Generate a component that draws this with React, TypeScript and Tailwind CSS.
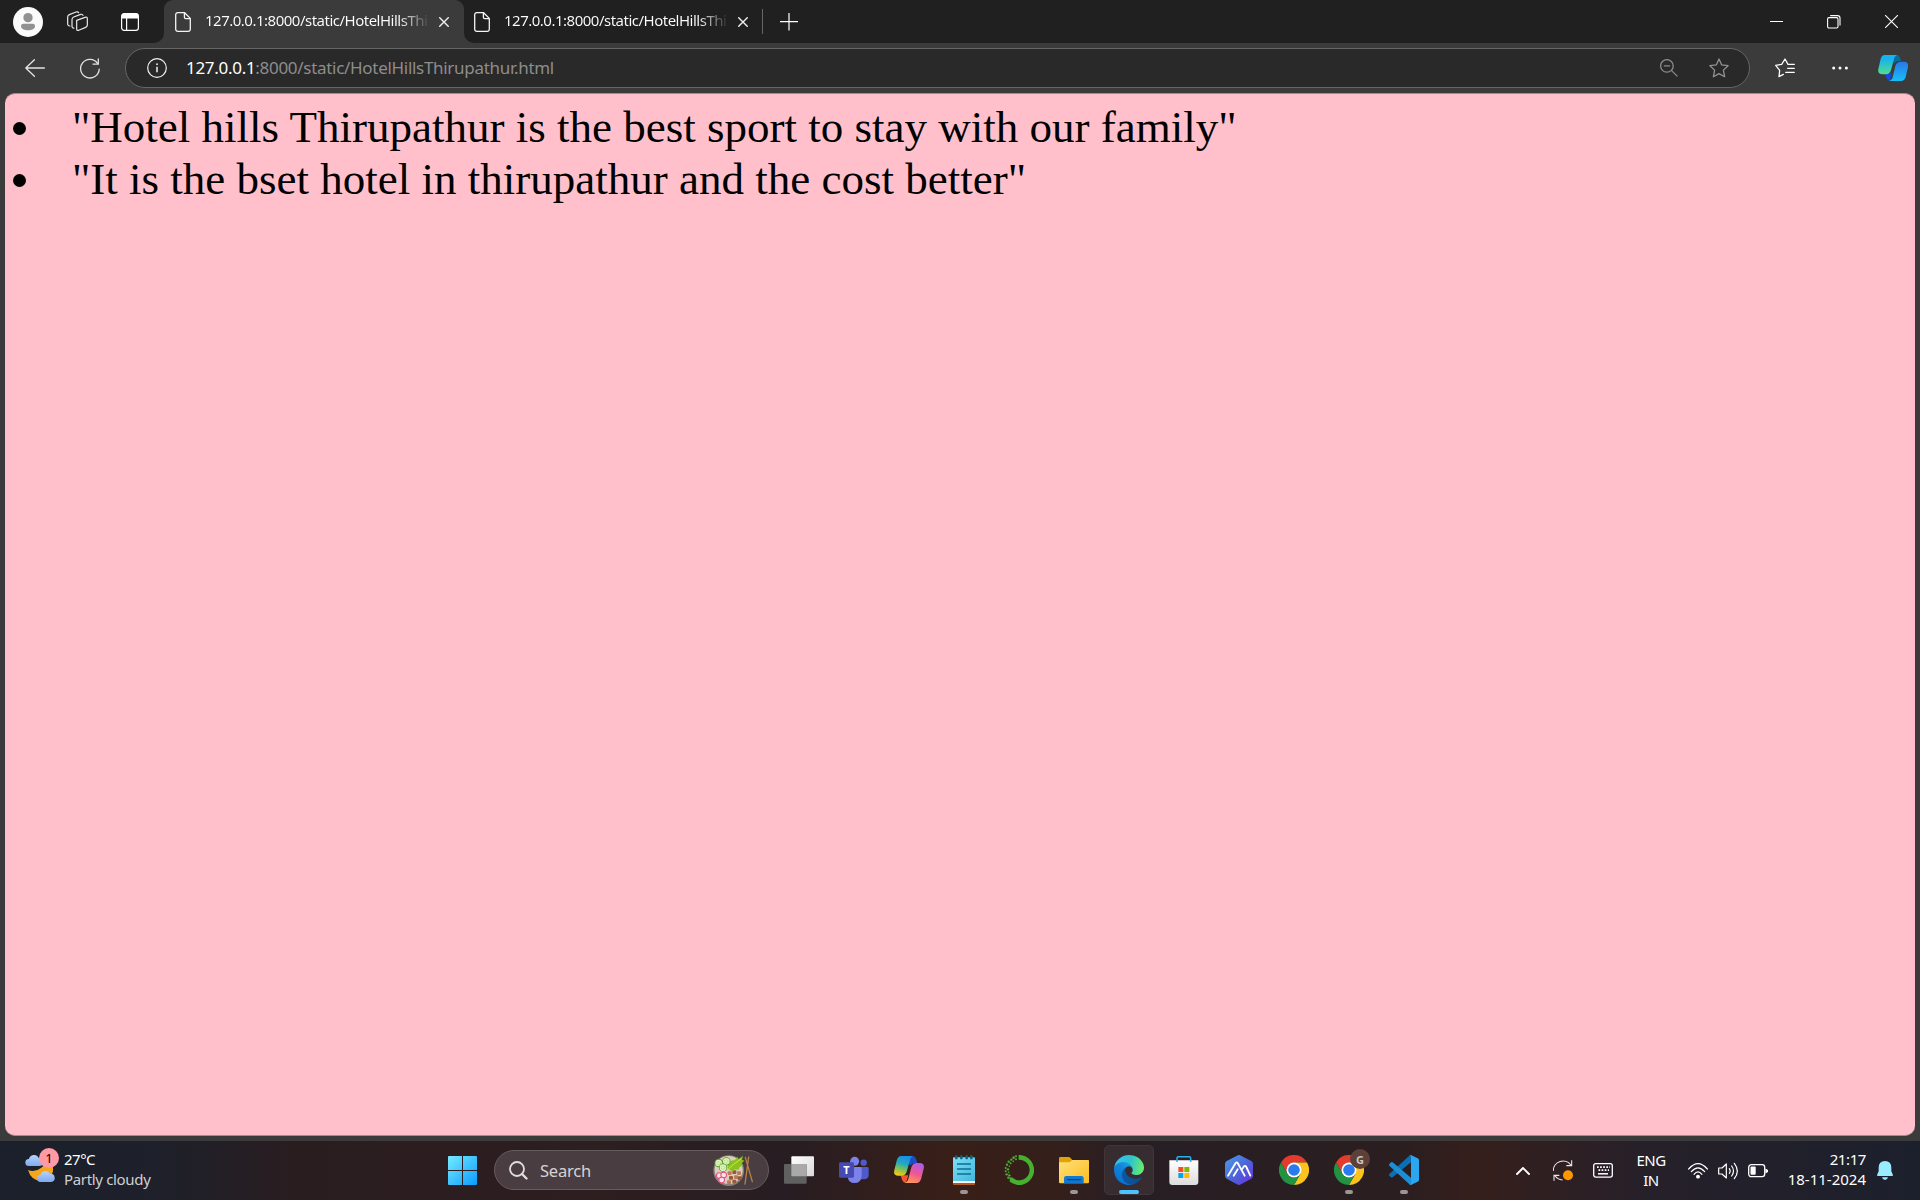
import React from "react";

const UI = "font-['Noto_Sans','Open_Sans',sans-serif]";

function FileIcon() {
  return (
    <svg className="h-5 w-4 shrink-0" viewBox="0 0 16 20" fill="none" stroke="#f5f5f5" strokeWidth="1.3">
      <path d="M2.8.7H9.6L15.3 6.4V17.2a2.1 2.1 0 0 1-2.1 2.1H2.8A2.1 2.1 0 0 1 .7 17.2V2.8A2.1 2.1 0 0 1 2.8.7Z" />
      <path d="M9.4.9V5.2a1.4 1.4 0 0 0 1.4 1.4h4.3" />
    </svg>
  );
}

function Tab({ active }: { active?: boolean }) {
  return (
    <div
      className={
        active
          ? "relative flex h-[43px] w-[300px] items-center rounded-t-[9px] bg-[#3b3b3b] pl-[11px]"
          : "relative flex h-[43px] w-[298px] items-center pl-[10px]"
      }
    >
      {active && (
        <>
          <svg className="absolute -left-2.5 bottom-0 h-2.5 w-2.5" viewBox="0 0 10 10">
            <path d="M10 0V10H0A10 10 0 0 0 10 0Z" fill="#3b3b3b" />
          </svg>
          <svg className="absolute -right-2.5 bottom-0 h-2.5 w-2.5" viewBox="0 0 10 10">
            <path d="M0 0V10H10A10 10 0 0 1 0 0Z" fill="#3b3b3b" />
          </svg>
        </>
      )}
      <FileIcon />
      <div className="mb-[3px] ml-[14px] w-[223px] whitespace-nowrap bg-gradient-to-r from-white from-[87%] to-transparent to-[101%] bg-clip-text text-[15px] leading-[20px] tracking-[-0.5px] text-transparent">
        127.0.0.1:8000/static/HotelHillsThi
      </div>
      <svg className="ml-[11px] h-2.5 w-2.5 shrink-0" viewBox="0 0 10 10" stroke="#f0f0f0" strokeWidth="1.4">
        <path d="M.3 .3 9.7 9.7M9.7 .3 .3 9.7" />
      </svg>
    </div>
  );
}

function TabStrip() {
  return (
    <div className="flex h-[43px] items-center bg-[#202020]">
      <svg className="ml-[13px] h-[30px] w-[30px]" viewBox="0 0 90 90">
        <circle cx="45" cy="45" r="45" fill="#fbfbfb" />
        <circle cx="45" cy="32" r="14" fill="#919191" />
        <path d="M31 50H59a7 7 0 0 1 7 7C66 66 56 70 45 70S24 66 24 57a7 7 0 0 1 7-7Z" fill="#919191" />
      </svg>
      <svg className="ml-6 h-[21px] w-[21px]" viewBox="0 0 63 63" fill="none" stroke="#e8e8e8" strokeWidth="3.6" strokeLinejoin="round" strokeLinecap="round">
        <path d="M29 28 54 19Q61 17 61 23V42Q61 47 56 49L37 57Q29 61 29 54Z" />
        <path d="M21 51Q15 52 15 45V26Q15 20 20 18L41 10Q47 9 48 13" />
        <path d="M9 45Q2 45 2 38V18Q2 13 7 11L27 3Q33 1 35 5" />
      </svg>
      <svg className="ml-[33px] h-[18px] w-[18px]" viewBox="0 0 18 18">
        <rect x=".6" y=".6" width="16.8" height="16.8" rx="2.6" fill="none" stroke="#fff" strokeWidth="1.2" />
        <path d="M.6 5.4V3A2.4 2.4 0 0 1 3 .6H15A2.4 2.4 0 0 1 17.4 3V5.4Z" fill="#fff" />
        <path d="M5.6 5V17.4" stroke="#fff" strokeWidth="1.2" />
      </svg>
      <div className="ml-[25px] flex">
        <Tab active />
        <Tab />
      </div>
      <div className="h-[25px] w-px bg-[#666]" />
      <svg className="ml-[17px] h-[18px] w-[18px]" viewBox="0 0 18 18" stroke="#fff" strokeWidth="1.2">
        <path d="M9 0V17.5M0 8.6H18" />
      </svg>
      <div className="ml-auto flex items-center pr-[22px]">
        <div className="h-px w-[13px] bg-white" />
        <svg className="ml-11 h-[14px] w-[14px]" viewBox="0 0 14 14" fill="none" stroke="#fff" strokeWidth="1.1">
          <rect x=".6" y="2.6" width="10.4" height="10.4" rx="1.4" />
          <path d="M3.2.6H10.6A2.4 2.4 0 0 1 13 3V10.6" />
        </svg>
        <svg className="ml-11 h-[13px] w-[13px]" viewBox="0 0 13 13" stroke="#fff" strokeWidth="1.1">
          <path d="M0 0 13 13M13 0 0 13" />
        </svg>
      </div>
    </div>
  );
}

function Toolbar() {
  return (
    <div className="flex h-[50px] items-center bg-[#3b3b3b]">
      <svg className="ml-[25px] h-[18px] w-5" viewBox="0 0 20 18" fill="none" stroke="#e4e4e4" strokeWidth="1.3" strokeLinecap="round" strokeLinejoin="round">
        <path d="M19.4 9H.8M9.4.7.8 9 9.4 17.3" />
      </svg>
      <svg className="ml-[35px] h-[21px] w-5" viewBox="0 0 20 21" fill="none" stroke="#e4e4e4" strokeWidth="1.3" strokeLinecap="round">
        <path d="M19.2 11.2A9.3 9.3 0 1 1 17.6 5.4" />
        <path d="M18.3.9V6.1H13" />
      </svg>
      <div className="ml-[25px] flex h-10 w-[1625px] items-center rounded-full border border-[#666] bg-[#292929] pl-[21px] pr-[20px]">
        <svg className="h-5 w-5" viewBox="0 0 20 20" fill="none" stroke="#f2f2f2" strokeWidth="1.2">
          <circle cx="10" cy="10" r="9.3" />
          <path d="M10 8.8V14.2" strokeWidth="1.5" />
          <circle cx="10" cy="6.2" r=".9" fill="#f2f2f2" stroke="none" />
        </svg>
        <div className="ml-[19px] whitespace-nowrap text-[17px] leading-6 tracking-[-0.3px] text-[#8d8d8d]">
          <span className="text-white">127.0.0.1</span>:8000/static/HotelHillsThirupathur.html
        </div>
        <svg className="ml-auto h-[18px] w-[18px]" viewBox="0 0 18 18" fill="none" stroke="#8b8b8b" strokeWidth="1.3">
          <circle cx="6.9" cy="6.9" r="6.3" />
          <path d="M3.8 6.9H10M11.4 11.4 17.4 17.4" />
        </svg>
        <svg className="ml-[31px] h-5 w-5" viewBox="0 0 20 20" fill="none" stroke="#929292" strokeWidth="1.3" strokeLinejoin="round">
          <path d="M10 1 12.7 6.9 19.1 7.7 14.4 12.1 15.6 18.7 10 15.6 4.4 18.7 5.6 12.1 .9 7.7 7.3 6.9Z" />
        </svg>
      </div>
      <svg className="ml-[25px] h-5 w-5" viewBox="0 0 60 60" fill="none" stroke="#fff" strokeWidth="3.8" strokeLinejoin="round" strokeLinecap="round">
        <path d="M25 49 12 56 14 37 2 22 20 19 30 3 39 19H58M38 31H58M32 43H58" />
      </svg>
      <svg className="ml-[37px] h-1 w-4" viewBox="0 0 16 4" fill="#fff">
        <circle cx="1.7" cy="2" r="1.5" />
        <circle cx="8" cy="2" r="1.5" />
        <circle cx="14.4" cy="2" r="1.5" />
      </svg>
      <svg className="ml-[30px] h-[30px] w-[30px]" viewBox="0 0 90 90">
        <defs>
          <linearGradient id="ca" x1="0" y1="0" x2="0" y2="1"><stop offset=".2" stopColor="#16b3ee" /><stop offset="1" stopColor="#52dd8d" /></linearGradient>
          <linearGradient id="cb" x1="0" y1="0" x2="0" y2="1"><stop offset="0" stopColor="#2878e8" /><stop offset="1" stopColor="#19bdf5" /></linearGradient>
        </defs>
        <path d="M47 6H59Q64 7 66 15L69 24Q53 22 49 31L42 20Z" fill="#076d9c" />
        <path d="M21 61H42L36 84Q27 82 24 73Z" fill="#1647e0" />
        <path d="M20 6H59Q51 7 48 18L39 51Q35 64 24 64H14Q-2 64 1 48L8 18Q11 6 20 6Z" fill="url(#ca)" />
        <path d="M69 26H77Q93 26 90 42L83 72Q79 84 69 84H32Q41 83 44 73L52 39Q56 26 69 26Z" fill="url(#cb)" />
      </svg>
    </div>
  );
}

function BrowserPage() {
  return (
    <div className="h-[1048px] bg-[#3b3b3b] px-[5px]">
      <main className="h-[1043px] rounded-[10px] border-y border-y-[#a58b90] bg-[#ffc0cb] pt-[7px] font-['Liberation_Serif',serif] text-[45px] leading-[52px] text-black">
        <ul>
          {[
            '"Hotel hills Thirupathur is the best sport to stay with our family"',
            '"It is the bset hotel in thirupathur and the cost better"',
          ].map((t) => (
            <li key={t} className="flex h-[52px] items-center whitespace-nowrap">
              <span className="ml-2 mt-[3px] h-[13px] w-[13px] rounded-full bg-black" />
              <span className="ml-[46px]">{t}</span>
            </li>
          ))}
        </ul>
      </main>
    </div>
  );
}

function TaskView() {
  return (
    <svg viewBox="0 0 90 90">
      <defs><linearGradient id="tv" x1="0" y1="0" x2="1" y2="1"><stop stopColor="#fff" /><stop offset="1" stopColor="#d8d8d8" /></linearGradient></defs>
      <rect x="22" y="4" width="68" height="60" rx="3" fill="url(#tv)" />
      <rect x="0" y="27" width="68" height="59" rx="3" fill="#606060" />
      <path d="M22 27H65a3 3 0 0 1 3 3V64H25a3 3 0 0 1-3-3Z" fill="#a9a9a9" />
    </svg>
  );
}

function Teams() {
  return (
    <svg viewBox="0 0 90 90">
      <circle cx="74" cy="23" r="9.5" fill="#5059c9" />
      <path d="M58 36H85Q89 36 89 40V61Q88 73 75 73H58Z" fill="#5059c9" />
      <circle cx="47" cy="19" r="13.5" fill="#7b83eb" />
      <path d="M26 36H64Q68 36 68 40V62Q67 84 46 84 29 84 26 66Z" fill="#7b83eb" />
      <rect x="0" y="22" width="45" height="46" rx="4" fill="#454bb0" />
      <text x="22.5" y="57" textAnchor="middle" fontSize="33" fontWeight="700" fill="#fff" fontFamily="Noto Sans, sans-serif">T</text>
    </svg>
  );
}

function Copilot() {
  return (
    <svg viewBox="0 0 90 90">
      <defs>
        <linearGradient id="pa" x1=".6" y1="0" x2=".3" y2="1"><stop stopColor="#168ee8" /><stop offset=".4" stopColor="#22a9c0" /><stop offset=".72" stopColor="#8dc34a" /><stop offset="1" stopColor="#f9c913" /></linearGradient>
        <linearGradient id="pb" x1=".7" y1="0" x2=".3" y2="1"><stop stopColor="#ae5ce8" /><stop offset=".5" stopColor="#ef5694" /><stop offset="1" stopColor="#ff9a56" /></linearGradient>
      </defs>
      <path d="M45 3H57Q64 4 67 14L70 25Q54 23 50 32L40 20Z" fill="#1c4ec9" />
      <path d="M20 61H43L36 84Q27 83 24 74Z" fill="#f5562f" />
      <path d="M21 3H58Q51 4 48 15L38 50Q34 62 23 62H13Q-3 62 1 46L8 17Q12 3 21 3Z" fill="url(#pa)" />
      <path d="M69 24H77Q93 24 89 41L82 70Q78 84 68 84H31Q40 83 43 72L52 37Q56 24 69 24Z" fill="url(#pb)" />
    </svg>
  );
}

function Notepad() {
  return (
    <svg viewBox="0 0 90 90">
      <defs><linearGradient id="np" x1="0" y1="0" x2="1" y2="1"><stop stopColor="#7fe0f4" /><stop offset="1" stopColor="#42b6dc" /></linearGradient></defs>
      <rect x="12" y="78" width="66" height="12" rx="3" fill="#b3591f" />
      <rect x="12" y="74" width="66" height="10" fill="#f4f4f4" />
      <path d="M12 10Q12 7 15 7H75Q78 7 78 10V78H12Z" fill="url(#np)" />
      {[22, 37, 53, 67].map((x) => <rect key={x} x={x - 3.5} y="0" width="7" height="13" rx="3.5" fill="#09647f" />)}
      <path d="M24 27H66M24 42H66M24 57H66" stroke="#0d6f92" strokeWidth="5" />
    </svg>
  );
}

const ringDots = [
  [36, 4, 3], [29, 8, 4], [36, 13, 3], [22, 14, 3.500], [28, 19, 2.500], [14, 20, 3.500], [20, 25, 3], [9, 29, 3.500], [16, 34, 2.500],
  [5, 39, 3], [12, 43, 3.500], [5, 49, 3], [14, 52, 2.500], [8, 58, 3.500], [16, 61, 3.500], [13, 68, 3.500], [20, 71, 4],
];

function Anaconda() {
  return (
    <svg viewBox="0 0 90 90" fill="#46b12f">
      <path d="M44 0A45 45 0 1 1 16 79L24 67A31 31 0 1 0 44 14Z" />
      {ringDots.map(([x, y, r]) => <circle key={`${x}-${y}`} cx={x} cy={y} r={r} />)}
    </svg>
  );
}

function Explorer() {
  return (
    <svg viewBox="0 0 90 90">
      <defs><linearGradient id="fo" x1="0" y1="0" x2="1" y2="1"><stop stopColor="#ffe07a" /><stop offset="1" stopColor="#fdbc20" /></linearGradient></defs>
      <path d="M0 10Q0 6 4 6H29Q32 6 34 8L40 15H86Q90 15 90 19V60H0Z" fill="#e2a30a" />
      <path d="M0 22H29Q33 22 36 19L39 15H86Q90 15 90 19V81Q90 85 86 85H4Q0 85 0 81Z" fill="url(#fo)" />
      <path d="M15 85V70Q15 63 22 63H67Q74 63 74 70V85Z" fill="#1078d0" />
      <path d="M26 74H64" stroke="#0a3f7c" strokeWidth="3.5" strokeLinecap="round" />
    </svg>
  );
}

function Edge() {
  return (
    <svg viewBox="0 0 256 256">
      <defs>
        <linearGradient id="e1" x1="60" y1="178" x2="230" y2="178" gradientUnits="userSpaceOnUse"><stop stopColor="#0c59a4" /><stop offset="1" stopColor="#114a8b" /></linearGradient>
        <linearGradient id="e2" x1="150" y1="95" x2="50" y2="220" gradientUnits="userSpaceOnUse"><stop stopColor="#1b9de2" /><stop offset=".4" stopColor="#1383d8" /><stop offset="1" stopColor="#0873d4" /></linearGradient>
        <linearGradient id="e3" x1="20" y1="60" x2="245" y2="110" gradientUnits="userSpaceOnUse"><stop stopColor="#35c1f1" /><stop offset=".5" stopColor="#2fc2cf" /><stop offset="1" stopColor="#66eb6e" /></linearGradient>
      </defs>
      <path d="M231 190.500a93.700 93.700 0 0 1-10.500 4.700 101.900 101.900 0 0 1-35.900 6.500c-47.300 0-88.500-32.500-88.500-74.300a31.500 31.500 0 0 1 16.400-27.300c-42.800 1.800-53.800 46.400-53.800 72.500 0 73.900 68.100 81.400 82.800 81.400 7.900 0 19.800-2.300 27-4.600l1.300-.4a128.300 128.300 0 0 0 66.600-52.800 4 4 0 0 0-5.400-5.700Z" fill="url(#e1)" />
      <path d="M105.700 241.400a79.200 79.200 0 0 1-22.700-21.300 80.700 80.700 0 0 1 29.500-120c3.200-1.500 8.500-4.100 15.600-4a32.400 32.400 0 0 1 25.700 13 31.900 31.900 0 0 1 6.300 18.700c0-.2 24.500-79.600-80-79.600C36.200 48.200.2 89.900.2 126.400a130.600 130.600 0 0 0 12.200 56 128 128 0 0 0 156.300 67.100 75.500 75.500 0 0 1-62.800-8Z" fill="url(#e2)" />
      <path d="M152.300 148.900c-.8 1-3.300 2.500-3.300 5.700 0 2.600 1.700 5.100 4.700 7.200 14.400 10 41.500 8.700 41.600 8.700a59.600 59.600 0 0 0 30.300-8.300 61.400 61.400 0 0 0 30.400-52.900c.3-22.400-8-37.300-11.300-43.900C223.500 23.800 177.700.3 128 .3A128 128 0 0 0 0 126.500c.5-36.500 36.800-66 80-66 3.500 0 23.500.3 42 10.100 16.300 8.600 24.900 18.900 30.800 29.200 6.200 10.700 7.300 24.100 7.300 29.500 0 5.300-2.700 13.300-7.800 19.900Z" fill="url(#e3)" />
    </svg>
  );
}

function Store() {
  return (
    <svg viewBox="0 0 90 90">
      <defs><linearGradient id="st" x1="0" y1="0" x2="0" y2="1"><stop stopColor="#fff" /><stop offset="1" stopColor="#dcdcdc" /></linearGradient></defs>
      <path d="M1 16H88V81Q88 90 79 90H10Q1 90 1 81Z" fill="url(#st)" />
      <path d="M24 21V9Q24 5 28 5H61Q65 5 65 9V21" fill="none" stroke="#29b1ea" strokeWidth="4.500" />
      <path d="M28 36H43V51H28Z" fill="#f25022" />
      <path d="M46 36H61V51H46Z" fill="#7fba00" />
      <path d="M28 54H43V69H28Z" fill="#00a4ef" />
      <path d="M46 54H61V69H46Z" fill="#ffb900" />
    </svg>
  );
}

function HexApp() {
  return (
    <svg viewBox="0 0 90 90">
      <defs><linearGradient id="hx" x1="0" y1="0" x2="1" y2="1"><stop stopColor="#4c9dea" /><stop offset=".5" stopColor="#4c67d8" /><stop offset="1" stopColor="#6a2fdf" /></linearGradient></defs>
      <path d="M39 2Q45-2 51 2L82 18Q87 21 87 27V62Q87 68 82 71L51 88Q45 92 39 88L8 71Q3 68 3 62V27Q3 21 8 18Z" fill="url(#hx)" />
      <path d="M12 62 35 24Q38 20 41 24L62 62M29 62 41 43M55 41 60 34Q64 31 67 36L79 62" fill="none" stroke="#fff" strokeWidth="5.500" strokeLinecap="round" strokeLinejoin="round" />
    </svg>
  );
}

function Chrome() {
  return (
    <svg viewBox="0 0 90 90">
      <path d="M6 22.500A45 45 0 0 1 84 22.500H45L25.500 56.250Z" fill="#e33b2e" />
      <path d="M84 22.500A45 45 0 0 1 45 90L64.500 56.250 45 22.500Z" fill="#fcc31e" />
      <path d="M45 90A45 45 0 0 1 6 22.500L25.500 56.250A22.500 22.500 0 0 0 64.500 56.250Z" fill="#229342" />
      <circle cx="45" cy="45" r="22.500" fill="#fff" />
      <circle cx="45" cy="45" r="17.500" fill="#2a7bee" />
    </svg>
  );
}

function VSCode() {
  return (
    <svg viewBox="0 0 90 90">
      <path d="M66 22 11 67Q9 69 6 67L1 62Q-1 60 1 57L61 2Q64-1 68 1Z" fill="#0a6fb4" />
      <path d="M66 68 11 22Q9 20 6 22L1 27Q-1 29 1 32L61 88Q64 91 68 89Z" fill="#1b8fd6" />
      <path d="M67 1 86 10Q90 12 90 16V74Q90 78 86 80L67 89Q63 91 61 88 66 92 66 84V6Q66-2 61 2 63-1 67 1Z" fill="#2ba7f0" />
    </svg>
  );
}

const apps: { name: string; icon: React.ReactNode; mark?: "run" | "active"; badge?: string }[] = [
  { name: "taskview", icon: <TaskView /> },
  { name: "teams", icon: <Teams /> },
  { name: "copilot", icon: <Copilot /> },
  { name: "notepad", icon: <Notepad />, mark: "run" },
  { name: "anaconda", icon: <Anaconda /> },
  { name: "explorer", icon: <Explorer />, mark: "run" },
  { name: "edge", icon: <Edge />, mark: "active" },
  { name: "store", icon: <Store /> },
  { name: "hex", icon: <HexApp /> },
  { name: "chrome", icon: <Chrome /> },
  { name: "chrome-g", icon: <Chrome />, mark: "run", badge: "G" },
  { name: "vscode", icon: <VSCode />, mark: "run" },
];

function Cloud({ className }: { className: string }) {
  return (
    <svg className={className} viewBox="0 0 52 34">
      <defs><linearGradient id="cl" x1="0" y1="0" x2="0" y2="1"><stop stopColor="#b5d3fb" /><stop offset="1" stopColor="#80a9f0" /></linearGradient></defs>
      <path d="M10 34A10 10 0 0 1 10 14 15 15 0 0 1 38 11 11.500 11.500 0 0 1 41 34Z" fill="url(#cl)" />
    </svg>
  );
}

function FoodBowl() {
  return (
    <svg className="h-[31px] w-[41px]" viewBox="0 0 123 93">
      <circle cx="47" cy="47" r="46" fill="#8d8177" />
      <circle cx="47" cy="45" r="42" fill="#d9cdbd" />
      {[[50, 55], [64, 52], [78, 55], [54, 69], [69, 67], [80, 70], [48, 82], [64, 80]].map(([x, y], i) => (
        <rect key={i} x={x - 6} y={y - 6} width="12" height="11" rx="3" fill={i % 2 ? "#96593d" : "#b97c58"} />
      ))}
      <path d="M44 40Q44 15 66 15L72 5 77 12 90 2 87 14 94 17 86 25 90 32 80 36 76 45 66 43 58 50Z" fill="#8cc11e" />
      <path d="M46 42Q60 28 84 12" stroke="#c7e94b" strokeWidth="3" fill="none" />
      {[[17, 24], [40, 19], [30, 38]].map(([x, y]) => (
        <g key={x}>
          <circle cx={x} cy={y} r="12.500" fill="#4e9d27" />
          <circle cx={x} cy={y} r="10" fill="#e3f3bf" />
          <circle cx={x} cy={y} r="5" fill="none" stroke="#8ebd58" strokeWidth="2" strokeDasharray="3 2" />
        </g>
      ))}
      {[[19, 62], [32, 60], [26, 75]].map(([x, y]) => (
        <g key={x}>
          <circle cx={x} cy={y} r="10" fill="#e34e82" />
          <circle cx={x} cy={y} r="7" fill="#fce3ea" />
        </g>
      ))}
      <path d="M97 7 118 80M107 6 96 87" stroke="#b58246" strokeWidth="4" strokeLinecap="round" />
    </svg>
  );
}

function Taskbar() {
  return (
    <div className="flex h-[59px] bg-[linear-gradient(90deg,#1b202c_0px,#1e202a_160px,#2a1d20_300px,#2d1e20_600px,#281d22_790px,#391f18_950px,#341f1b_1060px,#271e24_1130px,#2b1e20_1400px,#351f1c_1480px,#26202a_1650px,#1c202d_1920px)]">
      <div className="flex w-[448px] pl-[25px] pt-[7px]">
        <div className="relative h-[34px] w-[34px]">
          <Cloud className="absolute left-0 top-[6px] h-[12px] w-[19px]" />
          <svg className="absolute left-[3px] top-[17px] h-[18px] w-[25px]" viewBox="0 0 75 54">
            <path d="M0 15Q20 24 40 8 49 2 50-4L75 0Q80 40 45 48 10 50 0 15Z" fill="#f6a51f" />
          </svg>
          <Cloud className="absolute left-[12px] top-[22px] h-[12px] w-[18px]" />
          <div className="absolute left-[14px] top-0 flex h-5 w-5 items-center justify-center rounded-full bg-[#ff99a4] text-[13px] leading-none text-black">
            1
          </div>
        </div>
        <div className="ml-[5px] whitespace-nowrap text-[15px] leading-5 tracking-[-0.5px] text-white">
          <div className="mt-px">27°C</div>
          <div className="tracking-[-0.33px] text-[#cfcfd2]">Partly cloudy</div>
        </div>
      </div>
      <svg className="mt-[15px] h-[29px] w-[29px]" viewBox="0 0 87 87">
        <defs><linearGradient id="wn" x1="0" y1="0" x2="87" y2="87" gradientUnits="userSpaceOnUse"><stop stopColor="#75ecff" /><stop offset="1" stopColor="#0a9bff" /></linearGradient></defs>
        <path d="M3 0H42V42H0V3Q0 0 3 0ZM45 0H84Q87 0 87 3V42H45ZM0 45H42V87H3Q0 87 0 84ZM45 45H87V84Q87 87 84 87H45Z" fill="url(#wn)" />
      </svg>
      <div className="ml-[17px] mt-[9px] flex h-10 w-[275px] items-center rounded-full border border-[#655c60] bg-[#493d41] pl-[14px]">
        <svg className="h-[19px] w-[19px]" viewBox="0 0 19 19" fill="none" stroke="#dedede" strokeLinecap="round">
          <circle cx="8" cy="8" r="7" strokeWidth="1.800" />
          <path d="M13 13 17.500 17.500" strokeWidth="2.400" />
        </svg>
        <div className="ml-[12px] mt-px text-[16.5px] leading-6 tracking-[-0.2px] text-[#d6d3d4]">Search</div>
        <div className="ml-auto mr-[14px]"><FoodBowl /></div>
      </div>
      <div className="ml-[2px] flex pt-1">
        {apps.map((a) => (
          <div key={a.name} className="w-[55px] px-[3px]">
            <div
              className={
                a.mark === "active"
                  ? "flex h-[50px] w-[50px] flex-col items-center rounded-[5px] border border-[#413539] bg-[#372c30] pt-[9px]"
                  : "flex h-[50px] w-[50px] flex-col items-center pt-[10px]"
              }
            >
              <div className="relative h-[30px] w-[30px]">
                {a.icon}
                {a.badge && (
                  <div className="absolute -top-[6px] left-4 flex h-5 w-5 items-center justify-center rounded-full bg-[#5d4037] text-[11px] font-bold leading-none text-[#cfc6c2]">
                    {a.badge}
                  </div>
                )}
              </div>
              {a.mark === "active" && <div className="mt-[5px] h-1 w-5 rounded-full bg-[#4cc2ff]" />}
              {a.mark === "run" && <div className="mt-[5px] h-1 w-2 rounded-full bg-[#9b9596]" />}
            </div>
          </div>
        ))}
      </div>
      <div className="ml-auto flex h-full items-center text-white">
        <svg className="h-2 w-[14px]" viewBox="0 0 14 8" fill="none" stroke="#fff" strokeWidth="1.900" strokeLinecap="round">
          <path d="M1 7 7 1 13 7" />
        </svg>
        <svg className="ml-[23px] h-[21px] w-5" viewBox="0 0 60 63" fill="none" stroke="#e8e8e8" strokeWidth="3.300">
          <path d="M1 33A29 29 0 0 1 54 16M56 1V17H40M3 62V46H19M5 46Q13 59 29 60" />
          <circle cx="45" cy="46" r="15" fill="#ff9800" stroke="none" />
        </svg>
        <svg className="ml-5 h-[15px] w-5" viewBox="0 0 20 15">
          <rect x=".7" y=".7" width="18.600" height="13.400" rx="2" fill="none" stroke="#fff" strokeWidth="1.300" />
          <path d="M4 4.200H17M5.500 7.200H16" stroke="#fff" strokeWidth="1.700" strokeDasharray="1.700 1.400" />
          <path d="M5 10.800H15" stroke="#fff" strokeWidth="1.500" />
        </svg>
        <div className="mb-0.5 ml-[20px] w-[36px] text-center text-[15px] leading-5 tracking-[-0.5px]">
          <div>ENG</div>
          <div>IN</div>
        </div>
        <svg className="ml-[19px] h-4 w-5" viewBox="0 0 60 48" fill="none" stroke="#fff" strokeWidth="3.600" strokeLinecap="round">
          <path d="M2 18Q30-14 58 18M10 26Q30 3 50 26M18 34Q30 19 42 34" />
          <circle cx="30" cy="41" r="4" fill="#fff" />
        </svg>
        <svg className="ml-[10px] h-[18px] w-5" viewBox="0 0 60 54" fill="none" stroke="#fff" strokeWidth="3.600" strokeLinecap="round" strokeLinejoin="round">
          <path d="M2 18H12L25 6V48L12 36H2ZM34 20Q39 27 34 34M41 12Q52 27 41 42M49 4Q67 27 49 50" />
        </svg>
        <svg className="ml-[10px] h-[14px] w-5" viewBox="0 0 20 14">
          <rect x=".7" y=".7" width="16" height="12" rx="2.600" fill="none" stroke="#fff" strokeWidth="1.300" />
          <rect x="2.500" y="2.600" width="5.200" height="8.200" rx="1" fill="#fff" />
          <path d="M17.400 4.500 20 6V8L17.400 9.500Z" fill="#fff" />
        </svg>
        <div className="mb-[3px] ml-[16px] w-[82px] whitespace-nowrap text-right text-[15px] leading-5 tracking-[-0.4px]">
          <div>21:17</div>
          <div className="tracking-[0px]">18-11-2024</div>
        </div>
        <svg className="ml-[11px] mr-[27px] h-[19px] w-4" viewBox="0 0 48 57" fill="#99ebff">
          <path d="M24 0Q43 1 43 20V31L48 42Q48 45 45 45H3Q0 45 0 42L5 31V20Q5 1 24 0ZM15 49H33Q31 57 24 57T15 49Z" />
        </svg>
      </div>
    </div>
  );
}

export default function App() {
  return (
    <div className={`flex h-[1200px] w-[1920px] flex-col overflow-hidden bg-[#3b3b3b] ${UI}`}>
      <TabStrip />
      <Toolbar />
      <BrowserPage />
      <Taskbar />
    </div>
  );
}
